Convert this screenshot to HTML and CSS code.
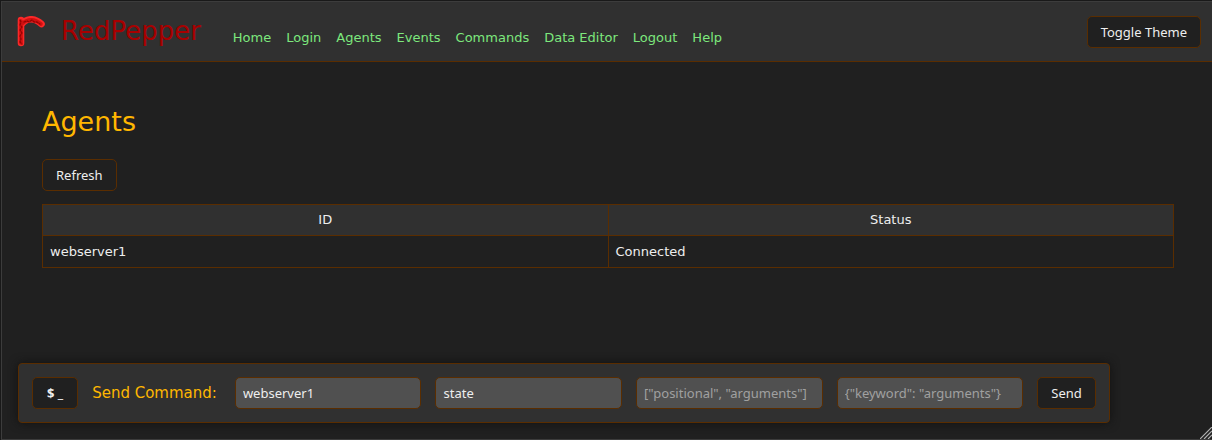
FILE: index.html
```html
<!DOCTYPE html>
<html lang="en">
<head>
<meta charset="utf-8">
<title>RedPepper</title>
<link rel="stylesheet" href="styles.css">
</head>
<body>
<div class="app">
  <header class="header">
    <svg class="logo" viewBox="0 0 30 32" aria-hidden="true">
      <g fill="none" stroke-linecap="round" stroke-linejoin="round">
        <path d="M5 4V27M5 9C11 1 19 2 25.500 8" stroke="#fb2828" stroke-width="6.6"/>
        <path d="M5 5V27M6 8C12 2 19 3 25 8" stroke="#d01010" stroke-width="3.600"/>
        <path d="M4 4l1 2l-1 3l2 2l-2 3l2 3l-2 3l1 3l-1 3l2 2M8 6l3-1l2 1l3-2l2 2l3 0l3 2" stroke="#960202" stroke-width="1.300" stroke-dasharray="2 1.500"/>
      </g>
    </svg>
    <span class="brand">RedPepper</span>
    <nav class="nav">
      <a href="#home">Home</a>
      <a href="#login">Login</a>
      <a href="#agents">Agents</a>
      <a href="#events">Events</a>
      <a href="#commands">Commands</a>
      <a href="#editor">Data Editor</a>
      <a href="#logout">Logout</a>
      <a href="#help">Help</a>
    </nav>
    <button class="button" type="button">Toggle Theme</button>
  </header>
  <main class="content">
    <h1 class="title">Agents</h1>
    <button class="button" type="button">Refresh</button>
    <table class="table">
      <thead><tr><th scope="col">ID</th><th scope="col">Status</th></tr></thead>
      <tbody><tr><td>webserver1</td><td>Connected</td></tr></tbody>
    </table>
  </main>
  <form class="command">
    <button class="button prompt" type="button">$ _</button>
    <label class="command-label" for="target">Send Command:</label>
    <input class="field" id="target" type="text" value="webserver1">
    <input class="field" type="text" value="state" aria-label="Command">
    <input class="field" type="text" placeholder='["positional", "arguments"]' aria-label="Positional arguments">
    <input class="field" type="text" placeholder='{"keyword": "arguments"}' aria-label="Keyword arguments">
    <button class="button" type="submit">Send</button>
  </form>
  <svg class="grip" viewBox="0 0 12 12" aria-hidden="true">
    <path d="M0 12L12 0M4 12L12 4M8 12L12 8" stroke="#b0b0b0" stroke-width="1.2"/>
  </svg>
</div>
</body>
</html>
```
FILE: styles.css
```css
* { box-sizing: border-box; }

body {
  margin: 0;
  background: #191919;
  color: #eee;
  font: 13px/18px "DejaVu Sans", sans-serif;
}

.app {
  position: relative;
  display: flex;
  flex-direction: column;
  min-height: calc(100vh - 1px);
  margin: 1px 0 0 1px;
  border: 1px solid #3c3c3c;
  border-right: 0;
  background: #202020;
}

.header {
  display: flex;
  align-items: center;
  height: 60px;
  padding: 0 11px 0 14px;
  background: #303030;
  border-bottom: 1px solid #5a2d00;
}

.logo { width: 30px; height: 32px; }

.brand {
  margin-left: 15px;
  padding-bottom: 2px;
  color: #a80000;
  font-size: 26px;
  line-height: 32px;
}

.nav {
  display: flex;
  flex: 1;
  gap: 15px;
  margin-left: 32px;
  padding-top: 13px;
}

.nav a { color: #7de87d; text-decoration: none; }

.button, .field {
  height: 32px;
  border: 1px solid #5a2d00;
  border-radius: 5px;
  color: #eee;
  font: 13px/18px "Noto Sans", sans-serif;
}

.button { padding: 0 13px; background: #202020; }

.content { flex: 1; padding: 40px 38px 40px 40px; }

.title {
  margin: 0 0 18px;
  color: #ffb700;
  font-size: 27px;
  font-weight: 400;
  line-height: 39px;
}

.table {
  width: 100%;
  margin-top: 13px;
  border-collapse: collapse;
}

.table th, .table td {
  width: 50%;
  height: 32px;
  padding: 0 7px;
  border: 1px solid #5a2d00;
  font-weight: 400;
}

.table th { height: 31px; background: #303030; }

.command {
  display: flex;
  align-items: center;
  gap: 14px;
  width: calc(90vw + 1px);
  margin: 0 0 16px 16px;
  padding: 13px;
  border: 1px solid #5a2d00;
  border-radius: 4px;
  background: #303030;
  box-shadow: 0 0 10px #111;
}

.prompt { padding: 0 14px; font-weight: 700; }

.command-label {
  padding-right: 4px;
  color: #ffb700;
  font-size: 15px;
  line-height: 20px;
  white-space: nowrap;
}

.field { flex: 1; min-width: 0; padding: 0 7px; background: #505050; }

.field::placeholder { color: #a0a0a0; opacity: 1; }

.grip { position: absolute; right: 0; bottom: 0; width: 12px; height: 12px; }
```
